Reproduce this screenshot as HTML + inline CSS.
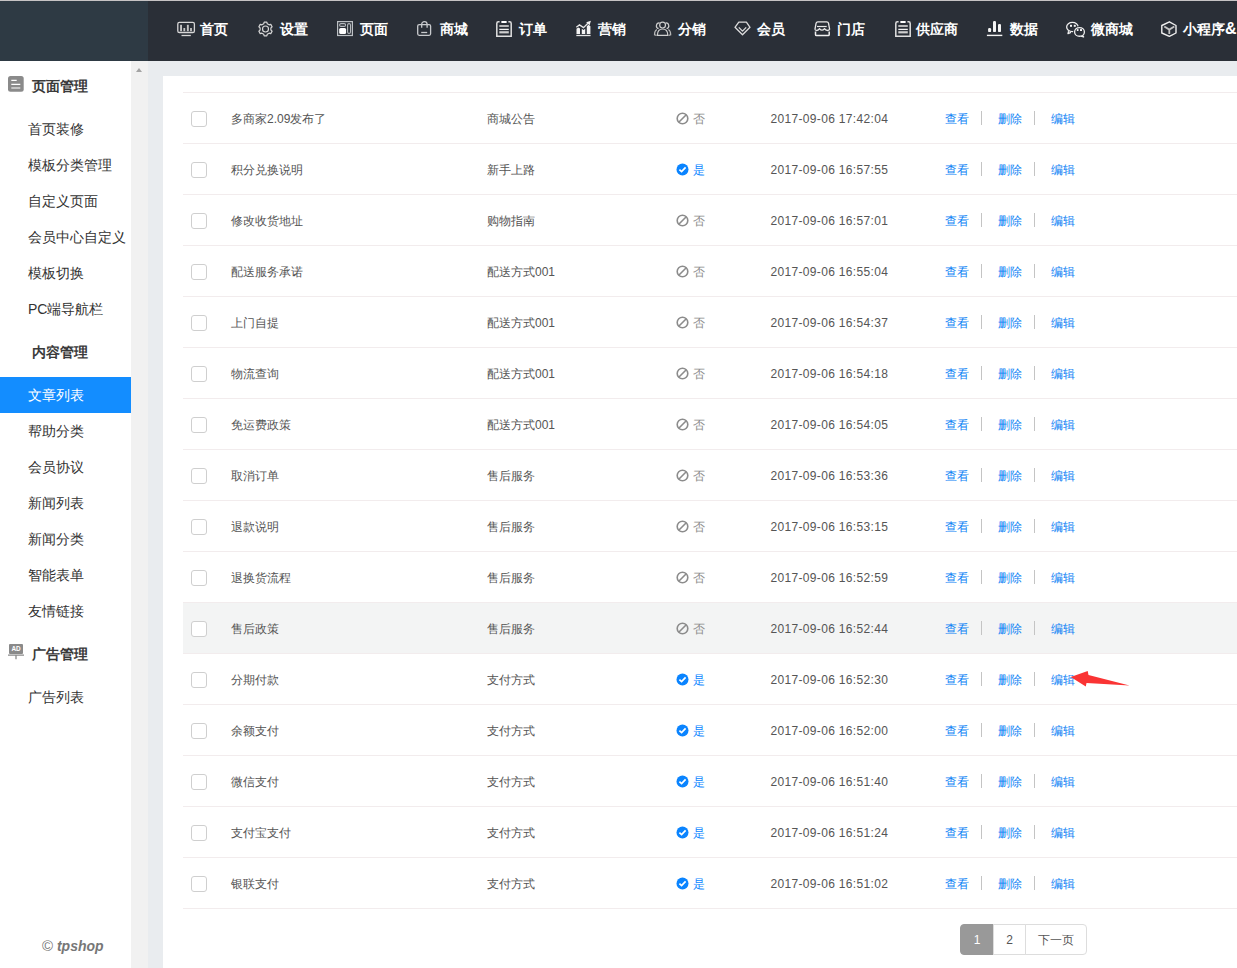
<!DOCTYPE html>
<html><head><meta charset="utf-8"><title>tpshop</title>
<style>
*{margin:0;padding:0;box-sizing:border-box}
html,body{width:1237px;height:968px;overflow:hidden;background:#fff;font-family:"Liberation Sans",sans-serif;font-size:12px;color:#555}
.topline{position:absolute;left:0;top:0;width:1237px;height:1px;background:#c6c3c4}
.logo{position:absolute;left:0;top:1px;width:148px;height:60px;background:#2e3a44}
.nav{position:absolute;left:148px;top:1px;width:1089px;height:60px;background:#2a2f37}
.nt{position:absolute;top:19.5px;line-height:18px;font-size:14px;font-weight:bold;color:#fff;white-space:nowrap}
.sh{position:absolute;left:0;width:131px;height:50px}
.sh .hi{position:absolute;left:8px;top:15px}
.sh span{position:absolute;left:32px;top:16px;line-height:18px;font-size:14px;font-weight:bold;color:#3a3a3a}
.si2{position:absolute;left:0;width:131px;height:36px;line-height:36px;padding-left:28px;font-size:14px;color:#333;white-space:nowrap}
.si2.act{background:#138dff;color:#fff}
.foot{position:absolute;left:42px;top:937px;line-height:18px;font-size:14px;color:#777;white-space:nowrap}
.foot b{font-style:italic}
.sbar{position:absolute;left:131px;top:61px;width:17px;height:907px;background:#f1f1f1}
.sbar i{position:absolute;left:5px;top:7px;width:0;height:0;border-left:3.5px solid transparent;border-right:3.5px solid transparent;border-bottom:4px solid #a3a3a3}
.main{position:absolute;left:148px;top:61px;width:1089px;height:907px;background:#e9ecef}
.card{position:absolute;left:163px;top:76px;width:1074px;height:892px;background:#fff}
.row{position:absolute;left:183px;width:1054px;height:51px;border-top:1px solid #f2eced}
.row.hl{background:#f3f4f4}
.row.last{height:52px;border-bottom:1px solid #f2eced}
.cb{position:absolute;left:8px;top:18px;width:16px;height:16px;border:1px solid #cfcfcf;border-radius:3px;background:#fff}
.c{position:absolute;top:17px;line-height:18px;white-space:nowrap}
.si{position:absolute;left:493px;top:19px}
.yes{color:#0a84ff}
.no{color:#8c8c8c}
.a{color:#0b82f5}
.sep{position:absolute;top:18px;width:1px;height:14px;background:#c4c4c4}
.pg{position:absolute;top:924px;height:31px;border:1px solid #ddd;line-height:31px;text-align:center;color:#555;font-size:12px;background:#fff}
</style></head><body>
<div class="topline"></div>
<div class="logo"></div>
<div class="nav"></div>

<svg width="1237" height="61" style="position:absolute;left:0;top:0" fill="none" stroke-linecap="butt">
<g stroke="#d6d6d6" stroke-width="1.3">
<rect x="177.8" y="22.4" width="16.6" height="10.1" rx="1.6"/>
<path d="M181.5 35.5 H190.8"/>
</g>
<g fill="#c4c4c4"><rect x="180.1" y="24.8" width="1.9" height="6.4"/><rect x="183.4" y="28" width="1.8" height="3.2"/><rect x="186.9" y="24.8" width="1.9" height="6.4"/><rect x="190.1" y="28" width="1.8" height="3.2"/></g>
<path d="M263.71 23.80 L264.16 22.13 L266.84 22.13 L267.29 23.80 L269.11 24.85 L270.78 24.41 L272.12 26.72 L270.90 27.95 L270.90 30.05 L272.12 31.28 L270.78 33.59 L269.11 33.15 L267.29 34.20 L266.84 35.87 L264.16 35.87 L263.71 34.20 L261.89 33.15 L260.22 33.59 L258.88 31.28 L260.10 30.05 L260.10 27.95 L258.88 26.72 L260.22 24.41 L261.89 24.85 Z" stroke="#d6d6d6" stroke-width="1.2" stroke-linejoin="round"/>
<circle cx="265.5" cy="29" r="3" stroke="#d6d6d6" stroke-width="1.2"/>
<rect x="337.6" y="21.6" width="14.8" height="13.9" stroke="#bcc0c4" stroke-width="1.2"/>
<rect x="339.6" y="23.6" width="6" height="2.8" rx="1.4" stroke="#b4b8bc" stroke-width="1.1"/>
<rect x="339.2" y="28.1" width="6.9" height="5.8" rx="1.5" fill="#ffffff"/>
<rect x="347.6" y="23.6" width="2.9" height="9.8" rx="1.4" stroke="#b4b8bc" stroke-width="1.1"/>
<g stroke="#c8cacd" stroke-width="1.3">
<rect x="417.7" y="24.6" width="12.9" height="10.7" rx="1.5"/>
<path d="M421.7 27.8 V24.3 A2.7 2.7 0 0 1 427.1 24.3 V27.8"/>
<path d="M421.2 32.5 H427.2"/>
</g>
<g stroke="#e0e0e0" stroke-width="1.5">
<path d="M499.6 21.8 H498.4 Q496.8 21.8 496.8 23.4 V36.3 H511.2 V23.4 Q511.2 21.8 509.6 21.8 H508.4"/>
<path d="M499.3 26 H508.8" stroke="#c8c8c8" stroke-width="1.8"/>
<path d="M499.3 29.4 H508.8" stroke="#f4f4f4" stroke-width="1.3"/>
<path d="M499.3 32.3 H508.8" stroke="#cfcfcf" stroke-width="2.2"/>
</g>
<rect x="501.1" y="21" width="5.8" height="2" rx="1" fill="#ffffff"/>
<g stroke="#e0e0e0" stroke-width="1.5">
<path d="M898.6 21.8 H897.4 Q895.8 21.8 895.8 23.4 V36.3 H910.2 V23.4 Q910.2 21.8 908.6 21.8 H907.4"/>
<path d="M898.3 26 H907.8" stroke="#c8c8c8" stroke-width="1.8"/>
<path d="M898.3 29.4 H907.8" stroke="#f4f4f4" stroke-width="1.3"/>
<path d="M898.3 32.3 H907.8" stroke="#cfcfcf" stroke-width="2.2"/>
</g>
<rect x="900.1" y="21" width="5.8" height="2" rx="1" fill="#ffffff"/>
<g fill="#f4f4f4">
<path d="M576.5 34 V28.8 L578.4 27.6 L580 28.6 V34 Z"/>
<path d="M581.8 34 V28.7 L583.5 30 L585.2 28.7 V34 Z"/>
<path d="M586.8 34 V26.2 L588.6 24.8 L590.4 26.2 V34 Z"/>
<path d="M586.2 22.2 L590.9 20.8 L589.6 25.2 Z"/>
</g>
<g stroke="#e6e6e6" stroke-width="1.3">
<path d="M576.3 27.3 L579.5 24.9 L583.5 27.6 L588.4 22.8"/>
<path d="M576.3 35.5 H590.6"/>
</g>
<g stroke="#cfcfcf" stroke-width="1.2">
<circle cx="662.6" cy="25.1" r="2.9"/>
<path d="M657.4 35.3 C657.4 31.5 659.5 29 662.6 29 C665.7 29 667.8 31.5 667.8 35.3 Z"/>
<path d="M659.6 22.9 A2.9 2.9 0 0 0 658.6 28.6 M665.6 22.9 A2.9 2.9 0 0 1 666.6 28.6"/>
<path d="M656.8 29.4 C655 30.4 654.5 32.5 654.5 34.8 L656.6 35.3 M668.4 29.4 C670.2 30.4 670.7 32.5 670.7 34.8 L668.6 35.3" stroke="#b8b8b8"/>
</g>
<g stroke="#dcdcdc" stroke-width="1.3" stroke-linejoin="round">
<path d="M738.8 22.2 H746.4 L750 27.3 L742.5 34.8 L735 27.3 Z"/>
<path d="M738.8 27.4 L742.5 31.1 L746.2 27.4"/>
</g>
<g stroke="#e8e8e8" stroke-width="1.3" stroke-linejoin="round">
<path d="M814.9 29.6 L816.1 23.2 Q816.4 21.8 817.9 21.8 H826.7 Q828.2 21.8 828.5 23.2 L829.7 29.6"/>
<path d="M814.9 29.6 Q817.2 31.8 819.5 28.6 Q822 31.8 824.5 28.6 Q827 31.8 829.7 29.6"/>
<path d="M817 26.5 H826.7" stroke-width="1.2"/>
<path d="M815.5 31.6 V34.4 Q815.5 35.5 816.6 35.5 H828.1 Q829.2 35.5 829.2 34.4 V31.6" stroke="#f0f0f0" stroke-width="1.5"/>
</g>
<g fill="#f4f4f4">
<rect x="988.1" y="28" width="3" height="4.1" rx="1.2"/>
<rect x="993" y="21" width="3" height="11.1" rx="1.2"/>
<rect x="998" y="23.9" width="3" height="8.2" rx="1.2"/>
<rect x="986.9" y="34.7" width="15.4" height="1.4"/>
</g>
<g stroke="#eeeeee" stroke-width="1.3">
<ellipse cx="1072.4" cy="27" rx="5.75" ry="4.6"/>
<path d="M1068.6 31.2 L1068 33.6 L1071 32.4" stroke-linejoin="round"/>
<ellipse cx="1079.5" cy="31.9" rx="4.9" ry="4.35" fill="#2a2f37" stroke="#2a2f37" stroke-width="3"/>
<ellipse cx="1079.5" cy="31.9" rx="4.9" ry="4.35" fill="#2a2f37"/>
<path d="M1082.6 35.6 L1083.6 37 L1080.8 36.2" stroke-linejoin="round"/>
</g>
<g fill="#f4f4f4">
<rect x="1070" y="24.8" width="2" height="2"/><rect x="1073.8" y="24.8" width="2" height="2"/>
<rect x="1076.8" y="29.1" width="1.7" height="1.9"/><rect x="1080" y="29.1" width="2" height="1.9"/>
</g>
<path d="M1169.4 21.8 L1176 25.5 V33 L1169.4 36.4 L1161.8 33 V25.5 Z" stroke="#eeeeee" stroke-width="1.4" stroke-linejoin="round"/>
<path d="M1164.3 26.6 L1169.3 29.6 L1174.3 26.6 M1169.3 29.6 V34" stroke="#c4c4c4" stroke-width="1.8"/>
</svg>
<div class="nt" style="left:200px">首页</div>
<div class="nt" style="left:280px">设置</div>
<div class="nt" style="left:360px">页面</div>
<div class="nt" style="left:439.5px">商城</div>
<div class="nt" style="left:518.5px">订单</div>
<div class="nt" style="left:598px">营销</div>
<div class="nt" style="left:677.5px">分销</div>
<div class="nt" style="left:757px">会员</div>
<div class="nt" style="left:837px">门店</div>
<div class="nt" style="left:916px">供应商</div>
<div class="nt" style="left:1009.5px">数据</div>
<div class="nt" style="left:1090.5px">微商城</div>
<div class="nt" style="left:1183px">小程序<span style="font-size:16px;position:relative;top:0.5px">&amp;</span></div>
<div class="sh" style="top:61px"><svg class="hi" width="16" height="16" viewBox="0 0 16 16"><rect x="0" y="0" width="15.7" height="15.7" rx="2.5" fill="#8a8a8a"/><path d="M3.3 4.4h5.4 M3.3 8.4h9 M3.3 12h9" stroke="#fff" stroke-width="1.2"/></svg><span>页面管理</span></div><div class="si2" style="top:111px">首页装修</div><div class="si2" style="top:147px">模板分类管理</div><div class="si2" style="top:183px">自定义页面</div><div class="si2" style="top:219px">会员中心自定义</div><div class="si2" style="top:255px">模板切换</div><div class="si2" style="top:291px">PC端导航栏</div><div class="sh" style="top:327px"><span>内容管理</span></div><div class="si2 act" style="top:377px">文章列表</div><div class="si2" style="top:413px">帮助分类</div><div class="si2" style="top:449px">会员协议</div><div class="si2" style="top:485px">新闻列表</div><div class="si2" style="top:521px">新闻分类</div><div class="si2" style="top:557px">智能表单</div><div class="si2" style="top:593px">友情链接</div><div class="sh" style="top:629px"><svg class="hi" width="16" height="16" viewBox="0 0 16 16"><rect x="1" y="0" width="14" height="10" rx="1" fill="#8a8a8a"/><text x="8" y="7.4" font-size="6.4" font-family="Liberation Sans" font-weight="bold" fill="#fff" text-anchor="middle">AD</text><path d="M0 11.2h16 M8 11.2v4" stroke="#8a8a8a" stroke-width="1.3"/></svg><span>广告管理</span></div><div class="si2" style="top:679px">广告列表</div>
<div class="foot"><span style="font-size:15px">©</span> <b>tpshop</b></div>
<div class="sbar"><i></i></div>
<div class="main"></div><div class="card"></div>
<div class="row" style="top:92px"><div class="cb"></div><div class="c" style="left:48px">多商家2.09发布了</div><div class="c" style="left:304px">商城公告</div><svg class="si" width="13" height="13" viewBox="0 0 13 13"><circle cx="6.5" cy="6.5" r="5.3" fill="none" stroke="#8c8c8c" stroke-width="1.6"/><line x1="3" y1="10" x2="10" y2="3" stroke="#8c8c8c" stroke-width="1.6"/></svg><div class="c no" style="left:510px">否</div><div class="c" style="left:587.5px;letter-spacing:0.33px">2017-09-06 17:42:04</div><div class="c a" style="left:762px">查看</div><div class="sep" style="left:798px"></div><div class="c a" style="left:814.5px">删除</div><div class="sep" style="left:851px"></div><div class="c a" style="left:868px">编辑</div></div>
<div class="row" style="top:143px"><div class="cb"></div><div class="c" style="left:48px">积分兑换说明</div><div class="c" style="left:304px">新手上路</div><svg class="si" width="13" height="13" viewBox="0 0 13 13"><circle cx="6.5" cy="6.5" r="6" fill="#0a84ff"/><path d="M3.4 6.6 L5.6 8.6 L9.6 4.4" fill="none" stroke="#fff" stroke-width="1.7"/></svg><div class="c yes" style="left:510px">是</div><div class="c" style="left:587.5px;letter-spacing:0.33px">2017-09-06 16:57:55</div><div class="c a" style="left:762px">查看</div><div class="sep" style="left:798px"></div><div class="c a" style="left:814.5px">删除</div><div class="sep" style="left:851px"></div><div class="c a" style="left:868px">编辑</div></div>
<div class="row" style="top:194px"><div class="cb"></div><div class="c" style="left:48px">修改收货地址</div><div class="c" style="left:304px">购物指南</div><svg class="si" width="13" height="13" viewBox="0 0 13 13"><circle cx="6.5" cy="6.5" r="5.3" fill="none" stroke="#8c8c8c" stroke-width="1.6"/><line x1="3" y1="10" x2="10" y2="3" stroke="#8c8c8c" stroke-width="1.6"/></svg><div class="c no" style="left:510px">否</div><div class="c" style="left:587.5px;letter-spacing:0.33px">2017-09-06 16:57:01</div><div class="c a" style="left:762px">查看</div><div class="sep" style="left:798px"></div><div class="c a" style="left:814.5px">删除</div><div class="sep" style="left:851px"></div><div class="c a" style="left:868px">编辑</div></div>
<div class="row" style="top:245px"><div class="cb"></div><div class="c" style="left:48px">配送服务承诺</div><div class="c" style="left:304px">配送方式001</div><svg class="si" width="13" height="13" viewBox="0 0 13 13"><circle cx="6.5" cy="6.5" r="5.3" fill="none" stroke="#8c8c8c" stroke-width="1.6"/><line x1="3" y1="10" x2="10" y2="3" stroke="#8c8c8c" stroke-width="1.6"/></svg><div class="c no" style="left:510px">否</div><div class="c" style="left:587.5px;letter-spacing:0.33px">2017-09-06 16:55:04</div><div class="c a" style="left:762px">查看</div><div class="sep" style="left:798px"></div><div class="c a" style="left:814.5px">删除</div><div class="sep" style="left:851px"></div><div class="c a" style="left:868px">编辑</div></div>
<div class="row" style="top:296px"><div class="cb"></div><div class="c" style="left:48px">上门自提</div><div class="c" style="left:304px">配送方式001</div><svg class="si" width="13" height="13" viewBox="0 0 13 13"><circle cx="6.5" cy="6.5" r="5.3" fill="none" stroke="#8c8c8c" stroke-width="1.6"/><line x1="3" y1="10" x2="10" y2="3" stroke="#8c8c8c" stroke-width="1.6"/></svg><div class="c no" style="left:510px">否</div><div class="c" style="left:587.5px;letter-spacing:0.33px">2017-09-06 16:54:37</div><div class="c a" style="left:762px">查看</div><div class="sep" style="left:798px"></div><div class="c a" style="left:814.5px">删除</div><div class="sep" style="left:851px"></div><div class="c a" style="left:868px">编辑</div></div>
<div class="row" style="top:347px"><div class="cb"></div><div class="c" style="left:48px">物流查询</div><div class="c" style="left:304px">配送方式001</div><svg class="si" width="13" height="13" viewBox="0 0 13 13"><circle cx="6.5" cy="6.5" r="5.3" fill="none" stroke="#8c8c8c" stroke-width="1.6"/><line x1="3" y1="10" x2="10" y2="3" stroke="#8c8c8c" stroke-width="1.6"/></svg><div class="c no" style="left:510px">否</div><div class="c" style="left:587.5px;letter-spacing:0.33px">2017-09-06 16:54:18</div><div class="c a" style="left:762px">查看</div><div class="sep" style="left:798px"></div><div class="c a" style="left:814.5px">删除</div><div class="sep" style="left:851px"></div><div class="c a" style="left:868px">编辑</div></div>
<div class="row" style="top:398px"><div class="cb"></div><div class="c" style="left:48px">免运费政策</div><div class="c" style="left:304px">配送方式001</div><svg class="si" width="13" height="13" viewBox="0 0 13 13"><circle cx="6.5" cy="6.5" r="5.3" fill="none" stroke="#8c8c8c" stroke-width="1.6"/><line x1="3" y1="10" x2="10" y2="3" stroke="#8c8c8c" stroke-width="1.6"/></svg><div class="c no" style="left:510px">否</div><div class="c" style="left:587.5px;letter-spacing:0.33px">2017-09-06 16:54:05</div><div class="c a" style="left:762px">查看</div><div class="sep" style="left:798px"></div><div class="c a" style="left:814.5px">删除</div><div class="sep" style="left:851px"></div><div class="c a" style="left:868px">编辑</div></div>
<div class="row" style="top:449px"><div class="cb"></div><div class="c" style="left:48px">取消订单</div><div class="c" style="left:304px">售后服务</div><svg class="si" width="13" height="13" viewBox="0 0 13 13"><circle cx="6.5" cy="6.5" r="5.3" fill="none" stroke="#8c8c8c" stroke-width="1.6"/><line x1="3" y1="10" x2="10" y2="3" stroke="#8c8c8c" stroke-width="1.6"/></svg><div class="c no" style="left:510px">否</div><div class="c" style="left:587.5px;letter-spacing:0.33px">2017-09-06 16:53:36</div><div class="c a" style="left:762px">查看</div><div class="sep" style="left:798px"></div><div class="c a" style="left:814.5px">删除</div><div class="sep" style="left:851px"></div><div class="c a" style="left:868px">编辑</div></div>
<div class="row" style="top:500px"><div class="cb"></div><div class="c" style="left:48px">退款说明</div><div class="c" style="left:304px">售后服务</div><svg class="si" width="13" height="13" viewBox="0 0 13 13"><circle cx="6.5" cy="6.5" r="5.3" fill="none" stroke="#8c8c8c" stroke-width="1.6"/><line x1="3" y1="10" x2="10" y2="3" stroke="#8c8c8c" stroke-width="1.6"/></svg><div class="c no" style="left:510px">否</div><div class="c" style="left:587.5px;letter-spacing:0.33px">2017-09-06 16:53:15</div><div class="c a" style="left:762px">查看</div><div class="sep" style="left:798px"></div><div class="c a" style="left:814.5px">删除</div><div class="sep" style="left:851px"></div><div class="c a" style="left:868px">编辑</div></div>
<div class="row" style="top:551px"><div class="cb"></div><div class="c" style="left:48px">退换货流程</div><div class="c" style="left:304px">售后服务</div><svg class="si" width="13" height="13" viewBox="0 0 13 13"><circle cx="6.5" cy="6.5" r="5.3" fill="none" stroke="#8c8c8c" stroke-width="1.6"/><line x1="3" y1="10" x2="10" y2="3" stroke="#8c8c8c" stroke-width="1.6"/></svg><div class="c no" style="left:510px">否</div><div class="c" style="left:587.5px;letter-spacing:0.33px">2017-09-06 16:52:59</div><div class="c a" style="left:762px">查看</div><div class="sep" style="left:798px"></div><div class="c a" style="left:814.5px">删除</div><div class="sep" style="left:851px"></div><div class="c a" style="left:868px">编辑</div></div>
<div class="row hl" style="top:602px"><div class="cb"></div><div class="c" style="left:48px">售后政策</div><div class="c" style="left:304px">售后服务</div><svg class="si" width="13" height="13" viewBox="0 0 13 13"><circle cx="6.5" cy="6.5" r="5.3" fill="none" stroke="#8c8c8c" stroke-width="1.6"/><line x1="3" y1="10" x2="10" y2="3" stroke="#8c8c8c" stroke-width="1.6"/></svg><div class="c no" style="left:510px">否</div><div class="c" style="left:587.5px;letter-spacing:0.33px">2017-09-06 16:52:44</div><div class="c a" style="left:762px">查看</div><div class="sep" style="left:798px"></div><div class="c a" style="left:814.5px">删除</div><div class="sep" style="left:851px"></div><div class="c a" style="left:868px">编辑</div></div>
<div class="row" style="top:653px"><div class="cb"></div><div class="c" style="left:48px">分期付款</div><div class="c" style="left:304px">支付方式</div><svg class="si" width="13" height="13" viewBox="0 0 13 13"><circle cx="6.5" cy="6.5" r="6" fill="#0a84ff"/><path d="M3.4 6.6 L5.6 8.6 L9.6 4.4" fill="none" stroke="#fff" stroke-width="1.7"/></svg><div class="c yes" style="left:510px">是</div><div class="c" style="left:587.5px;letter-spacing:0.33px">2017-09-06 16:52:30</div><div class="c a" style="left:762px">查看</div><div class="sep" style="left:798px"></div><div class="c a" style="left:814.5px">删除</div><div class="sep" style="left:851px"></div><div class="c a" style="left:868px">编辑</div></div>
<div class="row" style="top:704px"><div class="cb"></div><div class="c" style="left:48px">余额支付</div><div class="c" style="left:304px">支付方式</div><svg class="si" width="13" height="13" viewBox="0 0 13 13"><circle cx="6.5" cy="6.5" r="6" fill="#0a84ff"/><path d="M3.4 6.6 L5.6 8.6 L9.6 4.4" fill="none" stroke="#fff" stroke-width="1.7"/></svg><div class="c yes" style="left:510px">是</div><div class="c" style="left:587.5px;letter-spacing:0.33px">2017-09-06 16:52:00</div><div class="c a" style="left:762px">查看</div><div class="sep" style="left:798px"></div><div class="c a" style="left:814.5px">删除</div><div class="sep" style="left:851px"></div><div class="c a" style="left:868px">编辑</div></div>
<div class="row" style="top:755px"><div class="cb"></div><div class="c" style="left:48px">微信支付</div><div class="c" style="left:304px">支付方式</div><svg class="si" width="13" height="13" viewBox="0 0 13 13"><circle cx="6.5" cy="6.5" r="6" fill="#0a84ff"/><path d="M3.4 6.6 L5.6 8.6 L9.6 4.4" fill="none" stroke="#fff" stroke-width="1.7"/></svg><div class="c yes" style="left:510px">是</div><div class="c" style="left:587.5px;letter-spacing:0.33px">2017-09-06 16:51:40</div><div class="c a" style="left:762px">查看</div><div class="sep" style="left:798px"></div><div class="c a" style="left:814.5px">删除</div><div class="sep" style="left:851px"></div><div class="c a" style="left:868px">编辑</div></div>
<div class="row" style="top:806px"><div class="cb"></div><div class="c" style="left:48px">支付宝支付</div><div class="c" style="left:304px">支付方式</div><svg class="si" width="13" height="13" viewBox="0 0 13 13"><circle cx="6.5" cy="6.5" r="6" fill="#0a84ff"/><path d="M3.4 6.6 L5.6 8.6 L9.6 4.4" fill="none" stroke="#fff" stroke-width="1.7"/></svg><div class="c yes" style="left:510px">是</div><div class="c" style="left:587.5px;letter-spacing:0.33px">2017-09-06 16:51:24</div><div class="c a" style="left:762px">查看</div><div class="sep" style="left:798px"></div><div class="c a" style="left:814.5px">删除</div><div class="sep" style="left:851px"></div><div class="c a" style="left:868px">编辑</div></div>
<div class="row last" style="top:857px"><div class="cb"></div><div class="c" style="left:48px">银联支付</div><div class="c" style="left:304px">支付方式</div><svg class="si" width="13" height="13" viewBox="0 0 13 13"><circle cx="6.5" cy="6.5" r="6" fill="#0a84ff"/><path d="M3.4 6.6 L5.6 8.6 L9.6 4.4" fill="none" stroke="#fff" stroke-width="1.7"/></svg><div class="c yes" style="left:510px">是</div><div class="c" style="left:587.5px;letter-spacing:0.33px">2017-09-06 16:51:02</div><div class="c a" style="left:762px">查看</div><div class="sep" style="left:798px"></div><div class="c a" style="left:814.5px">删除</div><div class="sep" style="left:851px"></div><div class="c a" style="left:868px">编辑</div></div>
<div class="pg" style="left:960px;width:34px;background:#999;border-color:#999;color:#fff;border-radius:4px 0 0 4px">1</div>
<div class="pg" style="left:993px;width:33px">2</div>
<div class="pg" style="left:1025px;width:62px;border-radius:0 4px 4px 0">下一页</div>
<svg width="1237" height="968" style="position:absolute;left:0;top:0"><polygon points="1070.7,677 1087.7,671 1088.5,675 1129.5,685.5 1086.5,683 1085.8,686.5" fill="#fa3434"/></svg>
</body></html>
